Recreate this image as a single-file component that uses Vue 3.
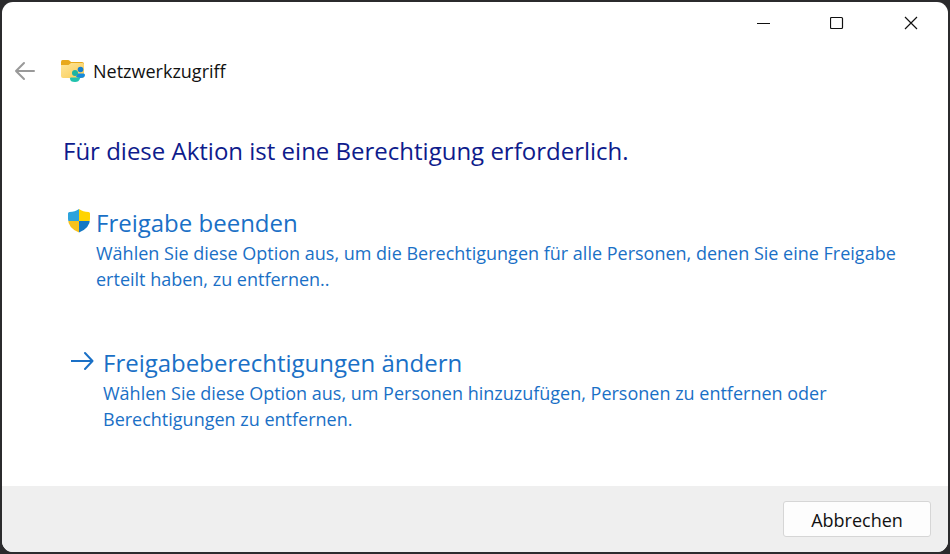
<script setup>
const options = [
  { id: 'stop', icon: 'shield', title: 'Freigabe beenden', text: 'Wählen Sie diese Option aus, um die Berechtigungen für alle Personen, denen Sie eine Freigabe erteilt haben, zu entfernen..' },
  { id: 'change', icon: 'arrow', title: 'Freigabeberechtigungen ändern', text: 'Wählen Sie diese Option aus, um Personen hinzuzufügen, Personen zu entfernen oder Berechtigungen zu entfernen.' },
]
</script>

<template>
  <div class="desktop">
    <section class="dialog" aria-labelledby="dialog-title">
      <div class="titlebar">
        <button type="button" aria-label="Minimieren"><svg width="14" height="14" viewBox="0 0 14 14"><path d="M1 7.5H14" /></svg></button>
        <button type="button" aria-label="Maximieren"><svg width="14" height="14" viewBox="0 0 14 14"><rect x="0.5" y="1.5" width="12" height="11" rx="1" /></svg></button>
        <button type="button" aria-label="Schließen"><svg width="14" height="14" viewBox="0 0 14 14"><path d="M1 1L13 13M13 1L1 13" /></svg></button>
      </div>
      <header class="header">
        <button type="button" class="back" aria-label="Zurück"><svg width="22" height="20" viewBox="0 0 22 20"><path d="M21 10H3M11 2L3 10L11 18" /></svg></button>
        <svg class="folder" width="26" height="24" viewBox="0 0 26 24">
          <defs>
            <linearGradient id="folder-front" x1="0" y1="0" x2="1" y2="1"><stop offset="0" stop-color="#ffe69a" /><stop offset="1" stop-color="#f8cb54" /></linearGradient>
          </defs>
          <path d="M1 3Q1 1 2.500 1H8Q9 1 10 2L11 3H22Q24 3 24 5V9H1Z" fill="#e8a91c" />
          <path d="M1 6H8.500L11 4H22.500Q24 4 24 5.500V17Q24 19 22 19H3Q1 19 1 17Z" fill="url(#folder-front)" />
          <circle cx="20.500" cy="10.500" r="2.800" fill="#1580cf" />
          <path d="M17.500 14.500H23.500Q25 14.500 25 16Q25 19 20.500 19Q17 19 16 17.500Z" fill="#168bdc" />
          <circle cx="15" cy="14" r="3" fill="#1bb4a2" />
          <path d="M11 18.500H19Q20 18.500 20 19.500Q19 23 15 23Q10 23 10 19.500Q10 18.500 11 18.500Z" fill="#20c2ad" />
        </svg>
        <span>Netzwerkzugriff</span>
      </header>
      <main>
        <h1 id="dialog-title">Für diese Aktion ist eine Berechtigung erforderlich.</h1>
        <button v-for="o in options" :key="o.id" type="button" class="option" :class="o.id">
          <svg v-if="o.icon === 'shield'" width="24" height="26" viewBox="0 0 24 26">
            <defs>
              <clipPath id="shield-shape"><path d="M12 1Q16 4 21.500 4Q23 4 23 5.500V11Q23 20 12 24.500Q1 20 1 11V5.500Q1 4 2.500 4Q8 4 12 1Z" /></clipPath>
            </defs>
            <g clip-path="url(#shield-shape)">
              <path d="M0 0H12V13H0Z" fill="#2da3dc" />
              <path d="M12 0H24V13H12Z" fill="#ffd400" />
              <path d="M0 13H12V26H0Z" fill="#f8c21c" />
              <path d="M12 13H24V26H12Z" fill="#1578c4" />
            </g>
          </svg>
          <svg v-else class="arrow" width="24" height="26" viewBox="0 0 24 26"><path d="M0 13H21M14 5L21.500 13L14 21" /></svg>
          <span class="copy"><span class="title">{{ o.title }}</span><span class="text">{{ o.text }}</span></span>
        </button>
      </main>
      <footer><button type="button" class="cancel">Abbrechen</button></footer>
    </section>
  </div>
</template>

<style>
body { margin: 0; background: #2b2b2d; }
</style>
<style scoped>
* { box-sizing: border-box; }
button { font: inherit; border: 0; background: transparent; padding: 0; }
svg { display: block; flex: none; }
.desktop { min-height: 100vh; padding: 2px; display: flex; background: #2b2b2d; font-family: "Open Sans", "Noto Sans", sans-serif; }
.dialog { flex: 1; display: flex; flex-direction: column; background: #fff; border-radius: 11px; overflow: hidden; }
.titlebar { display: flex; justify-content: flex-end; height: 42px; }
.titlebar button { width: 74px; display: grid; place-items: center; }
.titlebar path, .titlebar rect { fill: none; stroke: #111; stroke-width: 1.2; }
.header { display: flex; align-items: center; height: 54px; padding-left: 11px; font-size: 18px; color: #111; }
.back { margin-right: 25px; }
.back path { fill: none; stroke: #999; stroke-width: 2; stroke-linecap: round; stroke-linejoin: round; }
.folder { margin-right: 7px; }
main { flex: 1; padding: 33px 40px 0 61px; }
h1 { margin: 0 0 34px; font-size: 24px; line-height: 40px; font-weight: 400; color: #0e1b8c; }
.option { display: flex; align-items: flex-start; width: 100%; padding-left: 4px; text-align: left; color: #1a70c6; margin-bottom: 53px; }
.option svg { margin-top: 3px; }
.change { padding-left: 8px; }
.arrow path { fill: none; stroke: #1a70c6; stroke-width: 2; stroke-linecap: round; stroke-linejoin: round; }
.copy { margin-left: 5px; }
.change .copy { margin-left: 8px; }
.title, .text { display: block; }
.title { font-size: 24px; line-height: 35px; }
.text { font-size: 18px; line-height: 26px; }
footer { height: 66px; display: flex; justify-content: flex-end; align-items: center; padding-right: 17px; background: #efefef; }
.cancel { width: 148px; height: 36px; padding-top: 1px; border: 1px solid #d6d6d6; border-radius: 3px; background: #fdfdfd; color: #111; font-size: 18px; }
</style>
